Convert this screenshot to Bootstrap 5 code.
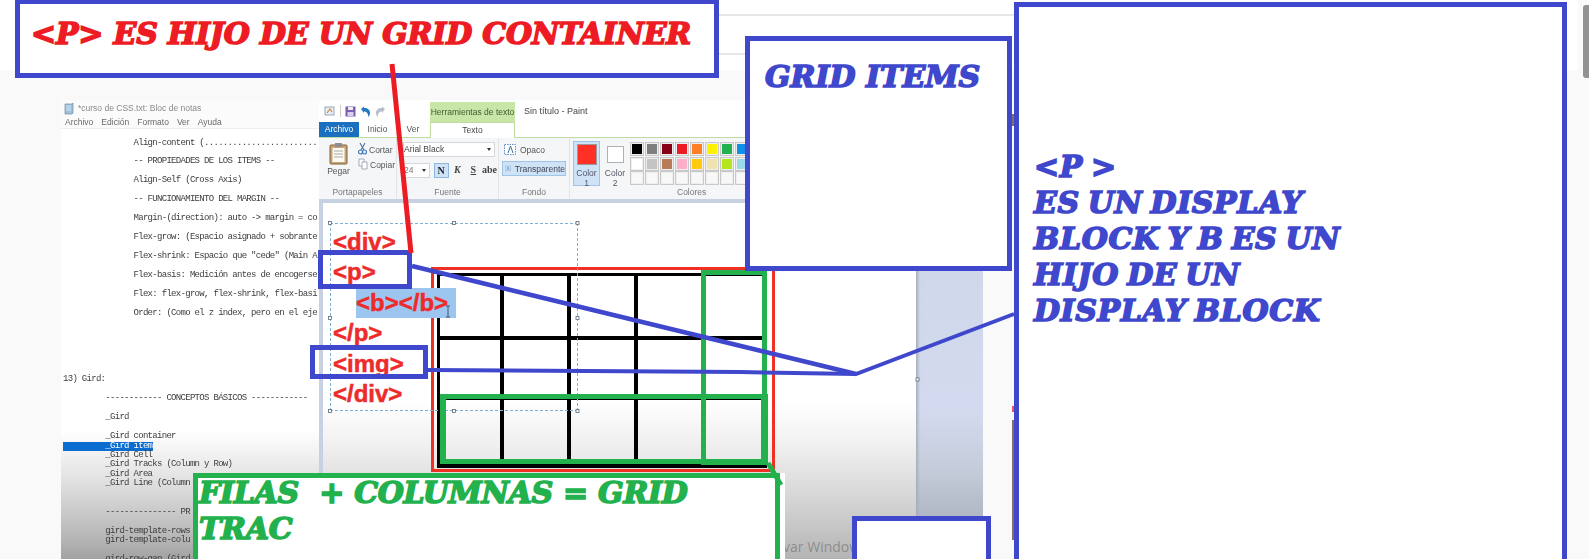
<!DOCTYPE html>
<html lang="es">
<head>
  <meta charset="UTF-8">
  <title>Grid items</title>
  <link href="https://cdn.jsdelivr.net/npm/bootstrap@5.3.2/dist/css/bootstrap.min.css" rel="stylesheet">
  <style>
    body { background: #fff; margin: 0; }
    #stage { position: relative; width: 1589px; height: 559px; overflow: hidden; background: #f9f9f9; }
    #topBand { height: 70px; background: #fff; margin-right: 11px; }
    #scrollThumb { position: absolute; right: 0; top: 5px; width: 6px; height: 73px; background: #929292; border-radius: 3px 0 0 3px; }

    /* Bloc de notas */
    #notepad { position: absolute; left: 61px; top: 100px; width: 258px; height: 459px; overflow: hidden;
      background: linear-gradient(#fff 72%, #e4e4e4 82%, #b4b4b4 96%, #a2a2a2 100%); filter: blur(.3px); }
    .np-title { height: 16px; padding-left: 3px; font: 8.5px/16px "Liberation Sans", sans-serif; color: #8a8a8a; background: #fbfbfb; }
    .np-menu { height: 13px; font: 8.5px/12px "Liberation Sans", sans-serif; color: #6a6a6a; padding-left: 4px; border-bottom: 1px solid #eee; background: #fbfbfb; }
    #noteText { margin: 0; padding: 9.500px 0 0 2px; font: 9px/9.47px "Liberation Mono", monospace; letter-spacing: -.7px; color: #3d3d3d; overflow: hidden; white-space: pre; }
    .np-sel { background: #0a6dcf; color: #fff; display: inline-block; width: 90px; height: 9px; }

    /* Paint */
    #paint { position: absolute; left: 319px; top: 100px; width: 664px; height: 459px; background: #fff; font-family: "Liberation Sans", sans-serif; font-size: 8.5px; color: #555; }
    .pt-title { height: 22px; }
    .pt-tools { width: 111px; padding-left: 5px; }
    .pt-context { width: 85px; height: 20px; margin-top: 2px; background: #c8e6a8; color: #3e5b30; text-align: center; line-height: 21px; white-space: nowrap; }
    .pt-name { padding-left: 9px; line-height: 22px; color: #444; font-size: 9px; }
    .pt-tabs { height: 15px; line-height: 15px; border-bottom: 1px solid #bfdc9f; box-sizing: content-box; }
    .pt-tab { text-align: center; }
    .pt-file { width: 40px; background: #1b6fc0; color: #fff; }
    .pt-home { width: 37px; }
    .pt-view { width: 34px; }
    .pt-text { width: 85px; background: #fff; height: 16px; border: 1px solid #bfdc9f; border-bottom: 0; color: #444; }
    .pt-ribbon { height: 61px; background: #f5f6f7; }
    .pt-group { position: relative; border-right: 1px solid #e3e4e6; padding-top: 4px; }
    .pt-cap { position: absolute; left: 0; right: 0; bottom: 1px; text-align: center; color: #777; line-height: 12px; }
    .pt-cap-colors { text-align: left; padding-left: 107px; }
    .pt-clip { width: 78px; }
    .pt-font { width: 102px; padding-left: 6px; }
    .pt-fill { width: 71px; padding-left: 3px; }
    .pt-colors { flex: 1; padding-left: 3px; border-right: 0; }
    .pt-paste { width: 39px; text-align: center; }
    .pt-small { line-height: 15px; }
    .pt-small svg { vertical-align: -2px; margin-right: 2px; }
    .pt-combo { height: 15px; background: #fff; border: 1px solid #d5d7da; width: 92px; line-height: 13px; color: #444; margin-bottom: 6px; position: relative; }
    .pt-size { width: 28px; height: 15px; background: #fff; border: 1px solid #d5d7da; line-height: 13px; color: #777; position: relative; }
    .pt-arrow { position: absolute; right: 3px; top: 5px; width: 0; height: 0; border: 2.5px solid transparent; border-top: 3px solid #333; border-bottom: 0; }
    .pt-fmt { width: 16px; height: 15px; line-height: 14px; text-align: center; font-family: "Liberation Serif", serif; font-weight: 700; font-size: 10px; color: #444; margin-right: 1px; }
    .pt-fmt-on { background: #cfe3f7; border: 1px solid #8db7e0; color: #223; }
    .pt-fill-row { height: 15px; line-height: 14px; padding-left: 2px; width: 64px; color: #555; white-space: nowrap; }
    .pt-fill-on { background: #cfe3f7; border: 1px solid #9fc4e6; color: #445; }
    .pt-c1 { width: 27px; height: 45px; margin-top: -1px; background: #cfe3f7; border: 1px solid #9fc4e6; text-align: center; line-height: 10px; color: #556; }
    .pt-c1 i { display: block; width: 20px; height: 21px; margin: 2px auto 3px; background: #ff3025; border: 1px solid #9a9a9a; }
    .pt-c2 { width: 24px; margin-left: 3px; text-align: center; line-height: 10px; color: #556; }
    .pt-c2 i { display: block; width: 17px; height: 17px; margin: 4px auto 5px; background: #fff; border: 1px solid #b0b0b0; }
    #palette { display: grid; grid-template-columns: repeat(8, 14px); grid-auto-rows: 14px; gap: .5px 1px; margin-left: 3px; }
    .pal-cell { border: 1px solid #c9c9c9; outline: 1px solid #eee; outline-offset: -2px; }
    .pt-strip { height: 4px; background: #c7d1e2; }
    .pt-work { height: 357px; }
    .pt-gutter { width: 4px; background: #c7d1e2; }
    .pt-canvas { flex: 1; background: linear-gradient(#fff 56%, #f0f0f0 68%, #c8c8c8 90%, #b3b3b3 100%); }
    .pt-side { width: 67px; background: linear-gradient(#cdd6e9 0%, #d3daef 58%, #c4ccda 75%, #a9b1bf 92%, #9aa0aa 100%); box-shadow: inset 4px 0 3px -2px #a7adba; }
    #paintBlur { filter: blur(.3px); }

    /* Contenido del lienzo de Paint */
    #redFrame { position: absolute; left: 431px; top: 267px; width: 344px; height: 205px; border: 3px solid #f03024; }
    #cellGrid { position: absolute; left: 437px; top: 273px; display: grid; grid-template-columns: 60px 63px 63px 63px 59px; grid-template-rows: 60px 56px 64px; gap: 4px; padding: 3px 3px 4px; background: #000; }
    .grid-cell { background: #fff; }
    .grid-cell-low { background: linear-gradient(#fff, #e8e8e8); }
    #textFrame { position: absolute; left: 330px; top: 223px; width: 248px; height: 188px; border: 1px dashed #7fb0cf; padding: 3px 0 0 2px; font: 700 24px/30.4px "Liberation Sans", sans-serif; -webkit-text-stroke: .5px currentColor; color: #ed2b2b; white-space: nowrap; }
    #textFrame div { height: 30.4px; }
    .tf-sel { display: inline-block; background: #9cc5f0; margin-left: 23px; padding-right: 8px; height: 30px; }

    /* Anotaciones */
    .note-box { position: absolute; background: #fff; border: 5px solid #3f48cc; }
    .note-hollow { background: transparent; }
    .note-green { border-color: #22b14c; }
    .note-text { font-family: "DejaVu Serif", serif; font-weight: 700; font-style: italic; font-size: 30px; -webkit-text-stroke: 1.6px currentColor; white-space: pre; }
    #boxTitle { left: 15px; top: -1px; width: 704px; height: 79px; padding: 10px 0 0 11px; color: #ed1c24; letter-spacing: -.2px; line-height: 40px; }
    #boxItems { left: 745px; top: 36px; width: 267px; height: 235px; padding: 16px 0 0 15px; color: #3f48cc; line-height: 40px; }
    #boxBlock { left: 1014px; top: 2px; width: 553px; height: 570px; padding: 142px 0 0 15px; color: #3f48cc; line-height: 36px; letter-spacing: .6px; word-spacing: -3px; }
    #boxEmpty { left: 852px; top: 516px; width: 139px; height: 60px; }
    #boxTrack { left: 193px; top: 473px; width: 587px; height: 100px; padding: 0 0 0 1px; color: #22b14c; line-height: 36px; letter-spacing: -.3px; box-shadow: 5px 0 0 #fff; }
    #boxTrack div { margin-top: -3px; }
    #boxP { left: 318px; top: 250px; width: 94px; height: 39px; }
    #boxImg { left: 310px; top: 345px; width: 118px; height: 34px; }
    #greenCol { left: 701px; top: 270px; width: 66px; height: 195px; }
    #greenRow { left: 440px; top: 394px; width: 328px; height: 70px; border-width: 5px 7px 5px 6px; }
    #inkLayer { position: absolute; left: 0; top: 0; }
    #watermark { position: absolute; left: 759px; top: 537px; font: 14px/20px "Open Sans", sans-serif; color: rgba(80, 80, 80, .45); white-space: nowrap; }
  </style>
</head>
<body>
  <div id="stage">
    <div id="topBand"></div>

    <!-- Bloc de notas -->
    <div id="notepad">
      <div class="np-title d-flex align-items-center gap-1">
        <svg width="10" height="13" viewBox="0 0 10 13"><path d="M1 2h7l1-1v10l-1 1H1z" fill="#9fc0da" stroke="#6f8ea8" stroke-width=".7"/><path d="M2 4h5M2 6h5M2 8h5" stroke="#e8f1f8" stroke-width=".7"/></svg>
        <span>*curso de CSS.txt: Bloc de notas</span>
      </div>
      <div class="np-menu d-flex"><span class="me-2">Archivo</span><span class="me-2">Edición</span><span class="me-2">Formato</span><span class="me-2">Ver</span><span>Ayuda</span></div>
      <pre id="noteText">               Align-content (........................

               -- PROPIEDADES DE LOS ITEMS --

               Align-Self (Cross Axis)

               -- FUNCIONAMIENTO DEL MARGIN --

               Margin-(direction): auto -> margin = co

               Flex-grow: (Espacio asignado + sobrante

               Flex-shrink: Espacio que "cede" (Main A

               Flex-basis: Medición antes de encogerse

               Flex: flex-grow, flex-shrink, flex-basi

               Order: (Como el z index, pero en el eje






13) Gird:

         ------------ CONCEPTOS BÁSICOS ------------

         _Gird

         _Gird container
<span class="np-sel">         _Gird item</span>
         _Gird Cell
         _Gird Tracks (Column y Row)
         _Gird Area
         _Gird Line (Column


         --------------- PR

         gird-template-rows
         gird-template-colu

         gird-row-gap (Gird</pre>
    </div>

    <!-- Paint -->
    <div id="paint">
      <div id="paintBlur">
        <div class="pt-title d-flex">
          <div class="pt-tools d-flex align-items-center gap-1">
            <svg width="12" height="12" viewBox="0 0 12 12"><rect x="1" y="2" width="9" height="8" fill="#e8eef5" stroke="#7d93ad" stroke-width=".8"/><path d="M3 8l3-4 2 3" stroke="#d9883f" stroke-width="1.2" fill="none"/></svg>
            <svg width="1" height="12"><rect width="1" height="12" fill="#ccc"/></svg>
            <svg width="11" height="11" viewBox="0 0 11 11"><rect x=".5" y=".5" width="10" height="10" fill="#7b5fae"/><rect x="3" y="1" width="5" height="3" fill="#eee"/><rect x="2.5" y="6" width="6" height="4" fill="#d8d0e8"/></svg>
            <svg width="11" height="11" viewBox="0 0 11 11"><path d="M1 3l3-2.5V2c4 0 6 2 6 5 0 2-1 3-2 4 .6-3-1-5.500-4-5.500V7z" fill="#2478c0"/></svg>
            <svg width="11" height="11" viewBox="0 0 11 11"><path d="M10 3L7 .5V2C3 2 1 4 1 7c0 2 1 3 2 4-.6-3 1-5.500 4-5.500V7z" fill="#b8bfc8"/></svg>
          </div>
          <div class="pt-context">Herramientas de texto</div>
          <div class="pt-name">Sin título - Paint</div>
        </div>
        <div class="pt-tabs d-flex">
          <div class="pt-tab pt-file">Archivo</div>
          <div class="pt-tab pt-home">Inicio</div>
          <div class="pt-tab pt-view">Ver</div>
          <div class="pt-tab pt-text">Texto</div>
        </div>
        <div class="pt-ribbon d-flex">
          <div class="pt-group pt-clip d-flex">
            <div class="pt-paste">
              <svg width="19" height="23" viewBox="0 0 19 23"><rect x="1" y="3" width="17" height="19" rx="1" fill="#c9a477" stroke="#7f6240"/><rect x="3.500" y="6" width="12" height="14" fill="#fbfbf4"/><path d="M5 9h9M5 12h9M5 15h9" stroke="#a9a9a9"/><rect x="6" y="1" width="7" height="4" fill="#8e8e8e"/></svg>
              <div>Pegar</div>
            </div>
            <div class="pt-small">
              <div><svg width="9" height="13" viewBox="0 0 9 13"><path d="M2 1l4 7M7 1L3 8" stroke="#567a9f" stroke-width="1.2"/><circle cx="2.500" cy="10" r="2" fill="none" stroke="#3f79b8" stroke-width="1.200"/><circle cx="6.500" cy="10" r="2" fill="none" stroke="#3f79b8" stroke-width="1.200"/></svg>Cortar</div>
              <div><svg width="10" height="12" viewBox="0 0 10 12"><path d="M1 1h5v7H1z" fill="#fff" stroke="#8a9aa8" stroke-width=".8"/><path d="M4 4h5v7H4z" fill="#fff" stroke="#8a9aa8" stroke-width=".8"/></svg>Copiar</div>
            </div>
            <div class="pt-cap">Portapapeles</div>
          </div>
          <div class="pt-group pt-font">
            <div class="pt-combo">Arial Black<span class="pt-arrow"></span></div>
            <div class="d-flex align-items-center">
              <div class="pt-size">24<span class="pt-arrow"></span></div>
              <div class="pt-fmt pt-fmt-on ms-1">N</div>
              <div class="pt-fmt fst-italic">K</div>
              <div class="pt-fmt text-decoration-underline">S</div>
              <div class="pt-fmt">abe</div>
            </div>
            <div class="pt-cap">Fuente</div>
          </div>
          <div class="pt-group pt-fill">
            <div class="pt-fill-row d-flex align-items-center gap-1 mb-1">
              <svg width="12" height="11" viewBox="0 0 12 11"><rect x=".5" y=".5" width="11" height="10" fill="#fff" stroke="#5d8fc2" stroke-dasharray="1.500 1"/><path d="M4 9l2.500-7L9 9" stroke="#3f6f9f" fill="none"/></svg>Opaco
            </div>
            <div class="pt-fill-row pt-fill-on d-flex align-items-center gap-1">
              <svg width="12" height="11" viewBox="0 0 12 11"><rect x=".5" y=".5" width="11" height="10" fill="none" stroke="#5d8fc2" stroke-dasharray="1.500 1"/><path d="M4 9l2.500-7L9 9" stroke="#3f6f9f" fill="none"/></svg>Transparente
            </div>
            <div class="pt-cap">Fondo</div>
          </div>
          <div class="pt-group pt-colors d-flex">
            <div class="pt-c1"><i></i>Color<br>1</div>
            <div class="pt-c2"><i></i>Color<br>2</div>
            <div id="palette"></div>
            <div class="pt-cap pt-cap-colors">Colores</div>
          </div>
        </div>
        <div class="pt-strip"></div>
      </div>
      <div class="pt-work d-flex">
        <div class="pt-gutter"></div>
        <div class="pt-canvas"></div>
        <div class="pt-side"></div>
      </div>
    </div>

    <div id="watermark">Activar Windows</div>

    <!-- Rejilla dibujada en Paint -->
    <div id="redFrame"></div>
    <div id="cellGrid"></div>
    <div id="textFrame">
      <div>&lt;div&gt;</div>
      <div>&lt;p&gt;</div>
      <div><span class="tf-sel">&lt;b&gt;&lt;/b&gt;</span></div>
      <div>&lt;/p&gt;</div>
      <div>&lt;img&gt;</div>
      <div>&lt;/div&gt;</div>
    </div>

    <!-- Cajas de anotacion -->
    <div id="greenCol" class="note-box note-hollow note-green"></div>
    <div id="greenRow" class="note-box note-hollow note-green"></div>
    <div id="boxP" class="note-box note-hollow"></div>
    <div id="boxImg" class="note-box note-hollow"></div>
    <div id="boxTitle" class="note-box note-text">&lt;P&gt; ES HIJO DE UN GRID CONTAINER</div>
    <div id="boxItems" class="note-box note-text">GRID ITEMS</div>
    <div id="boxBlock" class="note-box note-text">&lt;P &gt;
ES UN DISPLAY
BLOCK Y B ES UN
HIJO DE UN
DISPLAY BLOCK</div>
    <div id="boxEmpty" class="note-box"></div>
    <div id="boxTrack" class="note-box note-green note-text"><div>FILAS  + COLUMNAS = GRID
TRAC</div></div>

    <div id="scrollThumb"></div>

    <svg id="inkLayer" width="1589" height="559" viewBox="0 0 1589 559">
      <path d="M719 15H1014M719 54H745" stroke="#cfcfcf" stroke-width="1" fill="none"/>
      <path d="M1013 114v12M1013 420v120" stroke="#5b4033" stroke-width="1.500" fill="none"/>
      <path d="M1013 406v6" stroke="#ed1c24" stroke-width="1.500" fill="none"/>
      <path d="M392 64L411 253" stroke="#ed1c24" stroke-width="5" fill="none"/>
      <path d="M412 266L856 374" stroke="#3f48cc" stroke-width="4.500" fill="none"/>
      <path d="M428 370L740 372L856 374L1014 314" stroke="#3f48cc" stroke-width="4" fill="none"/>
      <path d="M768 463L781 485" stroke="#22b14c" stroke-width="5" fill="none"/>
      <g fill="#fff" stroke="#5a6a78" stroke-width=".8">
        <rect x="328.500" y="221.500" width="3" height="3"/><rect x="452.500" y="221.500" width="3" height="3"/><rect x="576" y="221.500" width="3" height="3"/>
        <rect x="328.500" y="316.500" width="3" height="3"/><rect x="576" y="316.500" width="3" height="3"/>
        <rect x="328.500" y="409.500" width="3" height="3"/><rect x="452.500" y="409.500" width="3" height="3"/><rect x="576" y="409.500" width="3" height="3"/>
        <rect x="916" y="378" width="3" height="3"/>
      </g>
      <path d="M446 306h4M446 317h4M448 306v11" stroke="#44566a" stroke-width="1" fill="none"/>
    </svg>
  </div>

  <script src="https://cdn.jsdelivr.net/npm/bootstrap@5.3.2/dist/js/bootstrap.bundle.min.js"></script>
  <script>
    // Paleta de Paint
    const paintColors = [
      "#000000", "#7f7f7f", "#880015", "#ed1c24", "#ff7f27", "#fff200", "#22b14c", "#0f8fe8",
      "#ffffff", "#c3c3c3", "#b97a57", "#ffaec9", "#ffc90e", "#efe4b0", "#b5e61d", "#99d9ea",
      "#f8f8f8", "#f8f8f8", "#f8f8f8", "#f8f8f8", "#f8f8f8", "#f8f8f8", "#f8f8f8", "#f8f8f8"
    ];
    const palette = document.getElementById("palette");
    paintColors.forEach((color) => {
      const swatch = document.createElement("div");
      swatch.className = "pal-cell";
      swatch.style.background = color;
      palette.appendChild(swatch);
    });

    // Celdas de la rejilla: 5 columnas, 3 filas
    const cellGrid = document.getElementById("cellGrid");
    for (let i = 0; i < 15; i++) {
      const cell = document.createElement("div");
      cell.className = i >= 10 ? "grid-cell grid-cell-low" : "grid-cell";
      cellGrid.appendChild(cell);
    }
  </script>
</body>
</html>
